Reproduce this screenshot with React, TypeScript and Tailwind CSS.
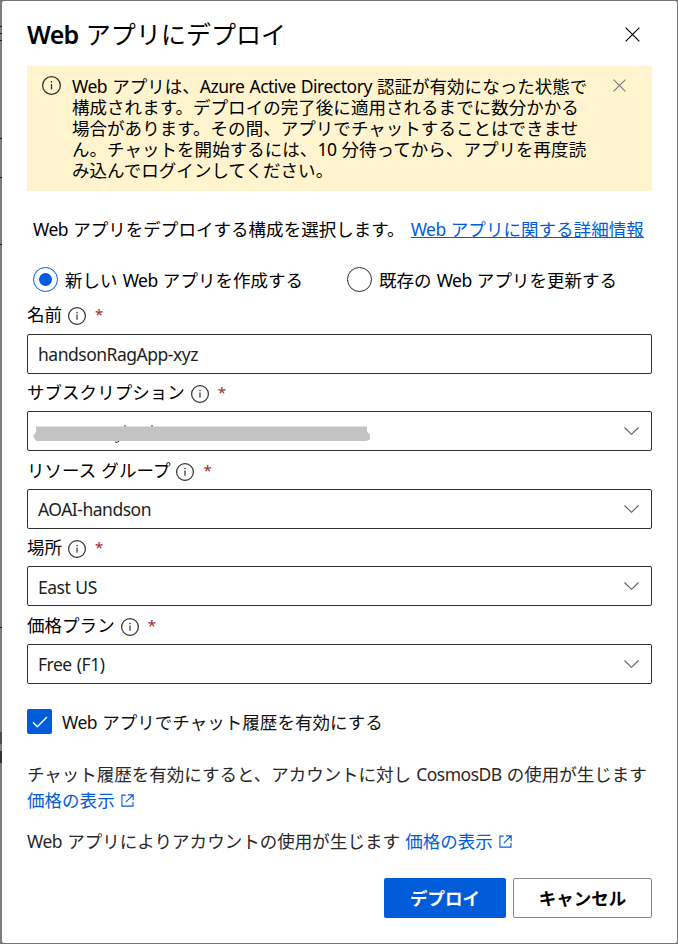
import React from 'react';

const L = ({ children }: { children: React.ReactNode }) => (
  <span className="tracking-[-0.028em] [word-spacing:1px] whitespace-pre">{children}</span>
);

const InfoIcon = ({ className }: { className: string }) => (
  <svg viewBox="0 0 18 18" className={className} fill="none" stroke="currentColor">
    <circle cx="9" cy="9" r="8.4" strokeWidth="1.2" />
    <path d="M9 7.6v5.2" strokeWidth="1.2" />
    <circle cx="9" cy="5.5" r="0.8" fill="currentColor" stroke="none" />
  </svg>
);

const CloseIcon = ({ className }: { className: string }) => (
  <svg viewBox="0 0 16 16" className={className} fill="none" stroke="currentColor" strokeWidth="1.3">
    <path d="M0.7 0.7 15.3 15.3M15.3 0.7 0.7 15.3" />
  </svg>
);

const ExternalIcon = () => (
  <svg viewBox="0 0 14 14" className="h-[13px] w-[13px] shrink-0" fill="none" stroke="currentColor" strokeWidth="1.2">
    <path d="M5 1.2H1v11.9h11.9V8.6M7.3 1h5.8v5.8M13 1 5.2 8.8" />
  </svg>
);

type FieldProps = { label: React.ReactNode; labelClass: string; select?: boolean; children: React.ReactNode };

const Field = ({ label, labelClass, select, children }: FieldProps) => (
  <div>
    <div className={`flex items-center ${labelClass}`}>
      <span className="whitespace-nowrap">{label}</span>
      <InfoIcon className="ml-[6px] mt-[3px] h-[18px] w-[18px] shrink-0 text-[#323130]" />
      <span className="ml-[9px] text-[15px] text-[#a4262c]">*</span>
    </div>
    <div className="flex h-10 items-center justify-between rounded-[2px] border border-[#323130] pl-[10px] pr-3 pt-px text-[#201f1e]">
      {children}
      {select && (
        <svg viewBox="0 0 15 8" className="mb-px h-2 w-[15px]" fill="none" stroke="#605e5c" strokeWidth="1.1">
          <path d="M0.5 0.5 7.5 7.3 14.5 0.5" />
        </svg>
      )}
    </div>
  </div>
);

export default function App() {
  return (
    <div className="flex h-[944px] w-[678px] bg-[#757575] pt-px pr-px pb-px font-['Noto_Sans','Noto_Sans_CJK_JP',sans-serif] text-[17.5px] leading-[21px] tracking-[0.04px] text-black">
      <div className="flex w-0.5 shrink-0 flex-col bg-[#7d7d7d]">
        <div className="mt-[25px] h-px bg-[#222]" />
        <div className="mt-[6px] h-px bg-[#222]" />
        <div className="mt-[6px] h-px bg-[#222]" />
        <div className="mt-[97px] h-px bg-[#222]" />
        <div className="mt-[38px] h-px bg-[#222]" />
        <div className="mt-[66px] h-px bg-[#222]" />
        <div className="mt-[382px] h-px bg-[#222]" />
        <div className="mt-[104px] h-3 bg-[#5b4a3b]" />
        <div className="mt-[7px] h-3 bg-[#3a302a]" />
      </div>
      <div className="flex w-[675px] flex-col rounded-[2px] bg-white px-[25px]">
        <header className="flex h-[65px] items-center justify-between">
          <h1 className="whitespace-nowrap text-[25px] leading-8">
            <span className="font-semibold tracking-[-0.028em] [word-spacing:1.5px] whitespace-pre">Web </span>アプリにデプロイ
          </h1>
          <CloseIcon className="mr-[12px] mt-px h-[15px] w-[15px] text-black" />
        </header>

        <div className="flex h-[125px] bg-[#fff4ce] pt-[10px]">
          <InfoIcon className="ml-[15px] h-[19px] w-[19px] shrink-0 text-[#323130]" />
          <div className="ml-[11px] w-[541px] shrink-0 whitespace-nowrap">
            <p><L>Web </L>アプリは、<L>Azure Active Directory </L>認証が有効になった状態で</p>
            <p>構成されます。デプロイの完了後に適用されるまでに数分かかる</p>
            <p>場合があります。その間、アプリでチャットすることはできませ</p>
            <p>ん。チャットを開始するには、<L>10 </L>分待ってから、アプリを再度読</p>
            <p>み込んでログインしてください。</p>
          </div>
          <CloseIcon className="mt-[3px] h-[13px] w-[13px] shrink-0 text-[#797775]" />
        </div>

        <p className="mt-[28px] flex whitespace-nowrap pl-[6px]">
          <span><L>Web </L>アプリをデプロイする構成を選択します。</span>
          <a className="ml-[6px] text-[#015cda] underline"><L>Web </L>アプリに関する詳細情報</a>
        </p>

        <div className="mt-[27px] flex h-[25px] items-center whitespace-nowrap pl-[6px]">
          <span className="flex h-[25px] w-[25px] items-center justify-center rounded-full border border-[#015cda]">
            <span className="h-[13px] w-[13px] rounded-full bg-[#015cda]" />
          </span>
          <span className="ml-[7px] w-[282px] pt-0.5">新しい<L> Web </L>アプリを作成する</span>
          <span className="h-[25px] w-[25px] rounded-full border border-[#323130]" />
          <span className="ml-[7px] pt-0.5">既存の<L> Web </L>アプリを更新する</span>
        </div>

        <Field label="名前" labelClass="h-[42px] pt-[3px]"><L>handsonRagApp-xyz</L></Field>
        <Field label="サブスクリプション" labelClass="h-[37px]" select>
          <svg viewBox="0 0 338 18" className="-ml-[5px] mt-[5px] h-[18px] w-[338px]">
            <path d="M82 17.2h2.5l2-1.5M91 1h2M118 1h2" stroke="#222" fill="none" />
            <path d="M3 1.5h331v5l3 3v5l-4 1.5H3l-3-5 3-4z" fill="#c3c3c3" />
          </svg>
        </Field>
        <Field label={<>リソース<L> </L>グループ</>} labelClass="h-[38px]" select><L>AOAI-handson</L></Field>
        <Field label="場所" labelClass="h-[37px]" select><span className="pt-0.5"><L>East US</L></span></Field>
        <Field label="価格プラン" labelClass="h-[38px]" select><L>Free (F1)</L></Field>

        <label className="mt-[25px] flex h-[25px] items-center whitespace-nowrap text-[#111]">
          <span className="mr-[10px] flex h-[25px] w-[25px] items-center justify-center rounded-[2px] bg-[#015cda]">
            <svg viewBox="0 0 16 12" className="h-3 w-4" fill="none" stroke="white" strokeWidth="1.4">
              <path d="M1 6.3 5.3 10.7 15 1" />
            </svg>
          </span>
          <span className="pt-0.5"><L>Web </L>アプリでチャット履歴を有効にする</span>
        </label>

        <div className="mt-[27px] whitespace-nowrap leading-[26px] text-[#292827]">
          <p className="tracking-[-0.01px]">チャット履歴を有効にすると、アカウントに対し<L> CosmosDB </L>の使用が生じます</p>
          <a className="flex items-center gap-[6px] text-[#015cda]">価格の表示<ExternalIcon /></a>
        </div>
        <div className="mt-[15px] flex whitespace-nowrap leading-[26px] text-[#292827]">
          <span><L>Web </L>アプリによりアカウントの使用が生じます<L> </L></span>
          <a className="flex items-center gap-[6px] text-[#015cda]">価格の表示<ExternalIcon /></a>
        </div>

        <footer className="mt-[24px] flex justify-end gap-[7px] font-bold">
          <button className="h-10 w-[122px] rounded-[2px] bg-[#015cda] text-white">デプロイ</button>
          <button className="h-10 w-[139px] rounded-[2px] border border-[#8a8886] bg-white">キャンセル</button>
        </footer>
      </div>
    </div>
  );
}
